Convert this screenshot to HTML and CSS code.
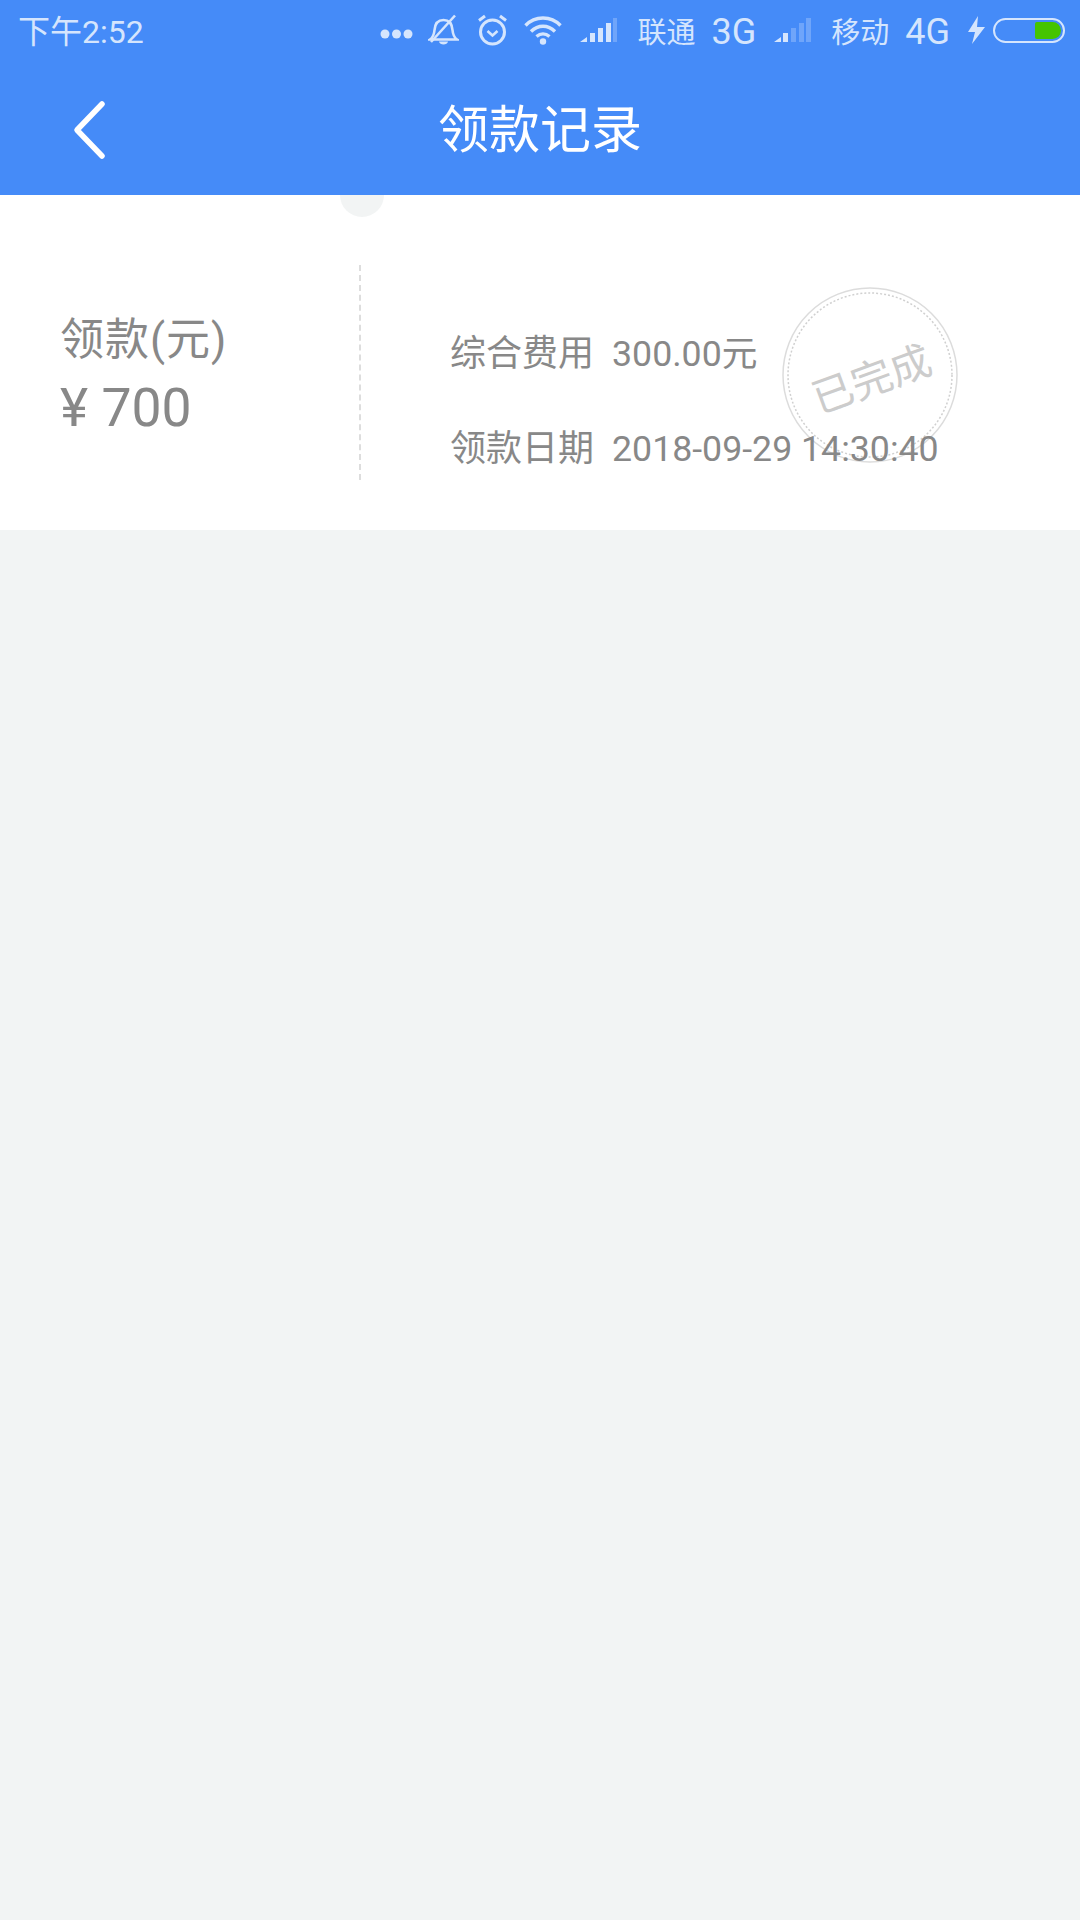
FILE: index.html
```html
<!DOCTYPE html>
<html lang="zh-CN">
<head>
    <meta charset="UTF-8">
    <meta name="viewport" content="width=device-width, initial-scale=1.0">
    <title>领款记录</title>
    <link rel="stylesheet" href="styles.css">
</head>
<body>
    <div class="header">
        <div class="status">
            <span class="time">下午2:52</span>
            <div class="status-right">
                <svg class="ic-dots" width="33" height="10" viewBox="0 0 33 10"><circle cx="5" cy="5" r="4.500"/><circle cx="16.500" cy="5" r="4.500"/><circle cx="28" cy="5" r="4.500"/></svg>
                <svg class="ic-bell" width="31" height="32" viewBox="0 0 31 32"><path d="M2 25.500c3-2 4-4 4.500-9.500.5-6 3-10 9-10s8.500 4 9 10c.5 5.500 1.500 7.500 4.500 9.500z" fill="none" stroke-width="2.600"/><path d="M11 27.500c.5 4 8.500 4 9 0z" stroke-width="0"/><path d="M3 28 27 1.500" fill="none" stroke-width="2.600"/></svg>
                <svg class="ic-alarm" width="31" height="32" viewBox="0 0 31 32"><circle cx="15.500" cy="18" r="12" fill="none" stroke-width="3"/><path d="M10.500 17l5 4.500 5-4.500" fill="none" stroke-width="2.600"/><path d="M2 6.500 8 2M29 6.500 23 2" fill="none" stroke-width="3"/></svg>
                <svg class="ic-wifi" width="38" height="29" viewBox="0 0 38 29"><path d="M1.500 9.500C11-.5 27-.5 36.500 9.500M7 15.500c7-7 17-7 24 0M12.500 20.500c4-3.500 9-3.500 13 0" fill="none" stroke-width="3.400"/><circle cx="19" cy="25.500" r="3.200"/></svg>
                <svg class="ic-signal" width="37" height="26" viewBox="0 0 37 26"><path d="M0 25 7 20v5zM10 16h5v9h-5zM18 11h5v14h-5zM26 6h5v19h-5z"/><path d="M33 1h4v24h-4z" class="dim"/></svg>
                <span class="carrier">联通</span>
                <span class="net">3G</span>
                <svg class="ic-signal" width="37" height="26" viewBox="0 0 37 26"><path d="M0 25 7 20v5zM9 16h5v9H9z"/><path d="M17 11h5v14h-5zM25 6h5v19h-5zM32 1h5v24h-5z" class="dim"/></svg>
                <span class="carrier">移动</span>
                <span class="net">4G</span>
                <svg class="ic-bolt" width="17" height="28" viewBox="0 0 17 28"><path d="M10 0 0 16h7L4 28l13-17H9z"/></svg>
                <div class="battery"><div class="battery-level"></div></div>
            </div>
        </div>
        <div class="nav">
            <svg class="back" width="36" height="62" viewBox="0 0 36 62"><path d="M31 5 6 31l25 26" fill="none" stroke="#fff" stroke-width="5.500" stroke-linecap="round" stroke-linejoin="round"/></svg>
            <span class="title">领款记录</span>
        </div>
    </div>
    <div class="card">
        <div class="notch"></div>
        <div class="card-left">
            <div class="label">领款(元)</div>
            <div class="amount">¥ 700</div>
        </div>
        <div class="card-right">
            <div class="row"><span class="row-name">综合费用</span><span class="row-value">300.00元</span></div>
            <div class="row"><span class="row-name">领款日期</span><span class="row-value">2018-09-29 14:30:40</span></div>
        </div>
        <div class="stamp">
            <svg width="176" height="176" viewBox="0 0 176 176"><circle cx="88" cy="88" r="87" fill="none" stroke="#dcdcdc" stroke-width="1.500"/><circle cx="88" cy="88" r="82" fill="none" stroke="#d0d0d0" stroke-width="1.500" stroke-dasharray="2 2"/></svg>
            <span class="stamp-text">已完成</span>
        </div>
    </div>
</body>
</html>
```

FILE: styles.css
```css
body {
    margin: 0;
    padding: 0;
    height: 1920px;
    background-color: #f2f4f4;
    font-family: Roboto, "Noto Sans CJK SC", sans-serif;
    overflow: hidden;
}
.header {
    position: relative;
    z-index: 2;
    height: 195px;
    background-color: #458bf8;
}
.status {
    height: 60px;
    padding: 0 15px 0 18px;
    display: flex;
    align-items: center;
    justify-content: space-between;
    color: #d5e5fd;
    font-size: 32px;
}
.time {
    margin-bottom: 2px;
}
.status-right {
    display: flex;
    align-items: center;
}
.status svg {
    fill: #d5e5fd;
    stroke: #d5e5fd;
    stroke-width: 0;
}
.status .dim {
    fill: #6fa5fa;
}
.ic-dots { margin-top: 8px; }
.ic-bell { margin-left: 15px; }
.ic-alarm { margin-left: 18px; }
.ic-wifi { margin-left: 16px; }
.ic-signal { margin-left: 18px; }
.carrier {
    margin-left: 20px;
    font-size: 29px;
}
.net {
    margin-left: 16px;
    margin-top: 3px;
    font-size: 36px;
}
.ic-bolt { margin-left: 18px; }
.battery {
    width: 72px;
    height: 25px;
    margin-left: 8px;
    box-sizing: border-box;
    border: 2px solid #d5e5fd;
    border-radius: 13px;
    padding: 2px;
    display: flex;
    justify-content: flex-end;
}
.battery-level {
    width: 26px;
    background-color: #45c400;
    border-radius: 2px 9px 9px 2px;
}
.nav {
    height: 135px;
    position: relative;
    display: flex;
    align-items: center;
    justify-content: center;
}
.back {
    position: absolute;
    left: 71px;
    top: 39px;
}
.title {
    font-size: 51px;
    color: #fff;
    margin-bottom: 4px;
}
.card {
    position: relative;
    height: 335px;
    box-sizing: border-box;
    padding: 70px 0 50px;
    background-color: #fff;
    display: flex;
    color: #888;
}
.notch {
    position: absolute;
    left: 340px;
    top: -22px;
    width: 44px;
    height: 44px;
    border-radius: 50%;
    background-color: #f2f4f4;
}
.card-left {
    width: 361px;
    box-sizing: border-box;
    padding-left: 60px;
    border-right: 2px dashed #ddd;
    display: flex;
    flex-direction: column;
    justify-content: center;
}
.label {
    font-size: 44px;
    letter-spacing: 1px;
    line-height: 60px;
    margin-top: 5px;
}
.amount {
    font-size: 53.500px;
    line-height: 64px;
    margin-top: 6px;
}
.card-right {
    padding-top: 58px;
    padding-left: 89px;
    display: flex;
    flex-direction: column;
    justify-content: center;
    gap: 45px;
    font-size: 36px;
}
.row {
    line-height: 50px;
    position: relative;
    z-index: 1;
}
.row-name {
    margin-right: 18px;
}
.row-value {
    font-size: 35.700px;
}
.stamp {
    position: absolute;
    left: 782px;
    top: 92px;
    width: 176px;
    height: 176px;
    display: flex;
    align-items: center;
    justify-content: center;
}
.stamp svg {
    position: absolute;
    left: 0;
    top: 0;
}
.stamp-text {
    font-size: 41px;
    color: #ccc;
    margin-top: 2px;
    transform: rotate(-20deg);
}
```
